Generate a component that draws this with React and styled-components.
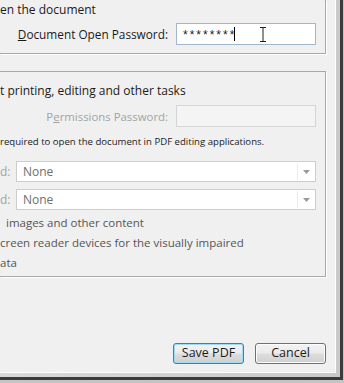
import React from 'react';
import styled, { createGlobalStyle } from 'styled-components';

const Global = createGlobalStyle`
  html, body {
    margin: 0;
    padding: 0;
    background: #c4c4c4;
    overflow: hidden;
  }
  body {
    font-family: "Open Sans", "Noto Sans", "Liberation Sans", sans-serif;
    font-size: 12px;
    color: #1b1b1b;
  }
`;

const Frame = styled.div`
  width: 343px;
  background: linear-gradient(90deg, #d9d9d9, #c9c9c9);
  padding: 0 4px 4px 0;
  border-right: 3px solid #3b3b3b;
  border-bottom: 3px solid #3b3b3b;
  box-sizing: border-box;
`;

const Panel = styled.div`
  background: #f0f0f0;
  border-right: 1px solid #fdfdfd;
  border-bottom: 1px solid #fdfdfd;
  padding-bottom: 8px;
  display: flex;
  flex-direction: column;
`;

const Group = styled.section`
  width: 326px;
  box-sizing: border-box;
  border-right: 1px solid #a8a8a8;
  border-bottom: 1px solid #a8a8a8;
  border-top: ${({ $top }) => ($top ? '1px solid #a8a8a8' : 'none')};
  box-shadow: 1px 1px 0 #ffffff;
  padding: ${({ $pad }) => $pad};
  margin-top: ${({ $mt }) => $mt || 0}px;
  display: flex;
  flex-direction: column;
`;

const Line = styled.div`
  line-height: ${({ $lh }) => $lh || 14}px;
  font-size: ${({ $fs }) => $fs || 12}px;
  margin-top: ${({ $mt }) => $mt || 0}px;
  color: ${({ $color }) => $color || '#1b1b1b'};
  white-space: pre;
`;

const FieldRow = styled.div`
  display: grid;
  grid-template-columns: 168px 140px;
  column-gap: 8px;
  align-items: center;
  margin-top: ${({ $mt }) => $mt || 0}px;
`;

const Label = styled.label`
  text-align: right;
  white-space: nowrap;
  font-size: ${({ $disabled }) => ($disabled ? '11.4px' : '11.8px')};
  color: ${({ $disabled }) => ($disabled ? '#a3a3a3' : '#1b1b1b')};
  u {
    text-decoration: underline;
  }
`;

const Input = styled.div`
  position: relative;
  height: 22px;
  box-sizing: border-box;
  border: 1px solid ${({ $disabled }) => ($disabled ? '#d5d5d5' : '#9fb8cc')};
  background: ${({ $disabled }) => ($disabled ? '#f4f4f4' : '#ffffff')};
  padding: 0 0 0 6px;
  display: flex;
  align-items: center;
  font-family: "Liberation Sans", sans-serif;
  font-size: 12px;
  letter-spacing: 2px;
  padding-top: 2px;
`;

const Caret = styled.span`
  display: inline-block;
  width: 1px;
  height: 14px;
  background: #000;
  margin-left: -2px;
  margin-top: -2px;
`;

const Beam = styled.svg`
  position: absolute;
  left: 82px;
  top: 3px;
`;

const ComboRow = styled.div`
  display: grid;
  grid-template-columns: 13px 300px;
  column-gap: 3px;
  align-items: center;
  margin-top: ${({ $mt }) => $mt || 0}px;
`;

const Combo = styled.div`
  height: 21px;
  box-sizing: border-box;
  border: 1px solid #cdcdcd;
  background: #fff;
  display: flex;
  align-items: stretch;
  color: #6e6e6e;
`;

const ComboText = styled.span`
  flex: 1;
  padding-left: 6px;
  display: flex;
  align-items: center;
`;

const ComboArrow = styled.span`
  width: 17px;
  border-left: 1px solid #ececec;
  display: flex;
  align-items: center;
  justify-content: center;
  margin: 1px 0;
`;

const Muted = styled.span`
  color: #a3a3a3;
`;

const Buttons = styled.div`
  width: 326px;
  display: flex;
  justify-content: flex-end;
  gap: 11px;
  margin-top: 66px;
`;

const Button = styled.button`
  width: 71px;
  height: 21px;
  box-sizing: border-box;
  font-family: "Open Sans", "Noto Sans", sans-serif;
  font-size: 12.5px;
  line-height: 1;
  color: #1b1b1b;
  padding: 0;
  border-radius: 3px;
  border: 1px solid ${({ $primary }) => ($primary ? '#3c7fb1' : '#707070')};
  background: linear-gradient(#f3f3f3 0%, #ebebeb 48%, #dddddd 52%, #d0d0d0 100%);
  box-shadow: ${({ $primary }) => ($primary ? 'inset 0 0 0 1px #9fdcf3' : 'inset 0 0 0 1px #fcfcfc')};
`;

const Arrow = () => (
  <svg width="7" height="4" viewBox="0 0 7 4"><path d="M0 0h7L3.5 4z" fill="#9a9a9a" /></svg>
);

export default function App() {
  return (
    <>
      <Global />
      <Frame>
        <Panel>
          <Group $pad="3px 0 8px 0">
            <Line>en the document</Line>
            <FieldRow $mt={6}>
              <Label><u>D</u>ocument Open Password:</Label>
              <Input>
                ********<Caret />
                <Beam width="8" height="15" viewBox="0 0 8 15">
                  <path d="M1 0.5h6M4 0.5v14M1 14.5h6" stroke="#222" strokeWidth="1" fill="none" />
                </Beam>
              </Input>
            </FieldRow>
          </Group>

          <Group $top $mt={17} $pad="12px 0 3px 0">
            <Line>t printing, editing and other tasks</Line>
            <FieldRow $mt={7}>
              <Label $disabled>P<u>e</u>rmissions Password:</Label>
              <Input $disabled />
            </FieldRow>
            <Line $fs={9.6} $mt={8}>required to open the document in PDF editing applications.</Line>
            <ComboRow $mt={12}>
              <Muted>d:</Muted>
              <Combo>
                <ComboText>None</ComboText>
                <ComboArrow><Arrow /></ComboArrow>
              </Combo>
            </ComboRow>
            <ComboRow $mt={7}>
              <Muted>d:</Muted>
              <Combo>
                <ComboText>None</ComboText>
                <ComboArrow><Arrow /></ComboArrow>
              </Combo>
            </ComboRow>
            <Line $lh={20} $mt={3} $fs={11.5} $color="#555">{'  images and other content'}</Line>
            <Line $lh={20} $fs={11.5} $color="#555">creen reader devices for the visually impaired</Line>
            <Line $lh={20} $fs={11.5} $color="#555">ata</Line>
          </Group>

          <Buttons>
            <Button $primary>Save PDF</Button>
            <Button>Cancel</Button>
          </Buttons>
        </Panel>
      </Frame>
    </>
  );
}
